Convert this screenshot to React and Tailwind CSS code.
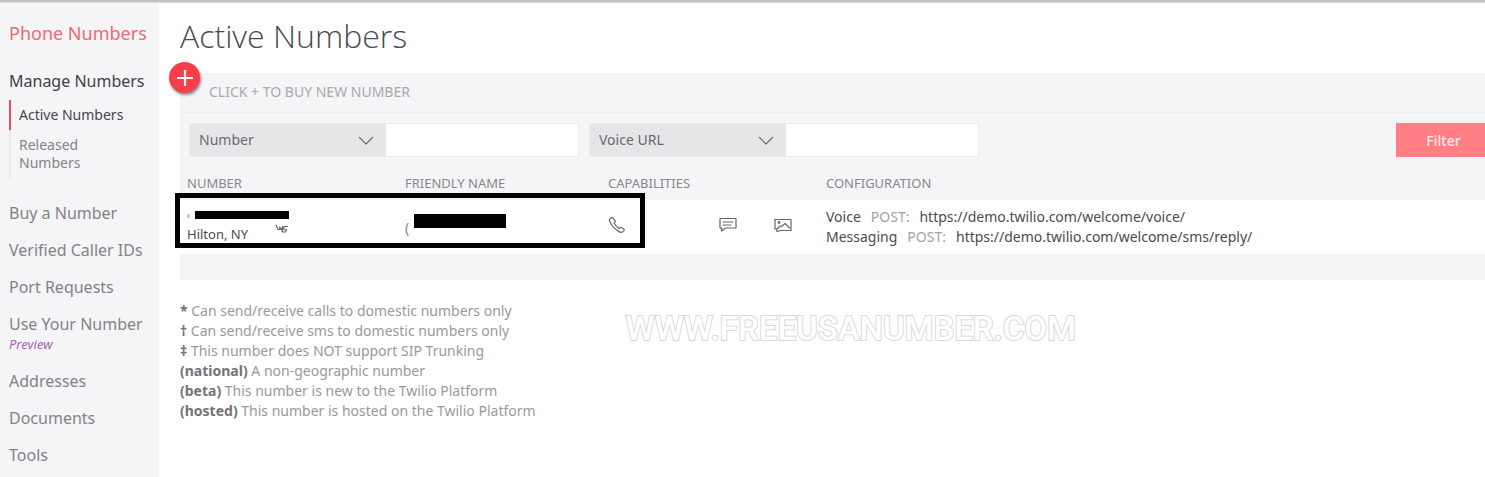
const NAV_ITEMS = [
  { label: "Buy a Number" },
  { label: "Verified Caller IDs" },
  { label: "Port Requests" },
  { label: "Use Your Number", note: "Preview" },
  { label: "Addresses" },
  { label: "Documents" },
  { label: "Tools" },
];

const NOTES = [
  ["*", "Can send/receive calls to domestic numbers only"],
  ["†", "Can send/receive sms to domestic numbers only"],
  ["‡", "This number does NOT support SIP Trunking"],
  ["(national)", "A non-geographic number"],
  ["(beta)", "This number is new to the Twilio Platform"],
  ["(hosted)", "This number is hosted on the Twilio Platform"],
];

const Icon = ({ children, ...props }) => (
  <svg
    xmlns="http://www.w3.org/2000/svg"
    fill="none"
    stroke="currentColor"
    strokeWidth={1.2}
    strokeLinecap="round"
    strokeLinejoin="round"
    {...props}
  >
    {children}
  </svg>
);

const PhoneIcon = (props) => (
  <Icon viewBox="0 0 18 18" {...props}>
    <path d="M3.3 1.7 1.6 3.2C.8 4.400 2.600 8.200 6 11.600s7.200 5.300 8.400 4.500l1.700-1.700c.4-.4.3-.9-.1-1.200l-2.400-1.700c-.4-.3-.9-.2-1.200.1l-.9 1c-1.600-.8-4.800-4-5.500-5.500l1-1c.4-.4.4-.8.100-1.200L4.800 1.900c-.4-.5-1-.6-1.500-.2Z" />
  </Icon>
);

const MessageIcon = (props) => (
  <Icon viewBox="0 0 18 16" {...props}>
    <path d="M1 1.500h16v9.500H6.500L2.500 14V11H1Z" />
    <path d="M4 5h10M4 8h8" />
  </Icon>
);

const PictureMessageIcon = (props) => (
  <Icon viewBox="0 0 18 16" {...props}>
    <path d="M1 2.500h16v11H7L3 14.500l-.5-2.500H1Z" />
    <path d="m3 12 3-3 1.500.5L11 6.500l4.500 4.500" />
    <circle cx="5" cy="5.500" r=".8" />
  </Icon>
);

const ChevronIcon = (props) => (
  <Icon viewBox="0 0 16 10" {...props}>
    <path d="m1.500 1.500 6.500 6.500 6.500-6.500" />
  </Icon>
);

const PointerIcon = (props) => (
  <Icon viewBox="0 0 14 10" {...props}>
    <path d="m1 1 2 4.500h2L4.500 3l3 3.500V2.500M12.500 2.500H9L8.500 5l3 .5-1 2.500H8L7 7" />
  </Icon>
);

function FilterField({ id, option }) {
  return (
    <div className="flex h-[34px] w-[390px] border border-[#ececee]">
      <div className="relative w-[196px] shrink-0">
        <select
          id={id}
          aria-label={`${option} filter field`}
          className="h-full w-full appearance-none bg-[#e6e5e7] pl-[9px] text-sm text-[#69696d] outline-none"
        >
          <option>{option}</option>
        </select>
        <ChevronIcon className="pointer-events-none absolute top-3 right-3 h-[10px] w-4 text-[#6d6d70]" />
      </div>
      <input
        type="text"
        aria-label={`${option} value`}
        className="min-w-0 flex-1 bg-white px-2 text-sm outline-none"
      />
    </div>
  );
}

function Sidebar() {
  return (
    <nav className="w-[159px] shrink-0 bg-[#f5f4f7] px-[9px] pt-[14px] text-[16px] text-[#838387]">
      <h2 className="text-[18px] leading-8 text-[#ec6b70] whitespace-nowrap">
        Phone Numbers
      </h2>
      <a href="#manage" className="mt-5 block leading-6 whitespace-nowrap text-[#414147]">
        Manage Numbers
      </a>
      <ul className="mt-[7px] text-[14px] leading-[18px]">
        <li className="border-l-2 border-[#e8505b] py-[6px] pl-2">
          <a href="#active" className="whitespace-nowrap text-[#47474c]">
            Active Numbers
          </a>
        </li>
        <li className="border-l-2 border-[#e8e7ea] py-[6px] pl-2">
          <a href="#released" className="block w-20">
            Released Numbers
          </a>
        </li>
      </ul>
      <ul className="mt-[23px] flex flex-col gap-[13px] leading-6">
        {NAV_ITEMS.map(({ label, note }) => (
          <li key={label}>
            <a href="#nav" className="block whitespace-nowrap">
              {label}
              {note && (
                <em className="block pb-1 text-[13px] leading-4 text-[#a55fb8]">
                  {note}
                </em>
              )}
            </a>
          </li>
        ))}
      </ul>
    </nav>
  );
}

function NumbersTable() {
  return (
    <div className="relative">
      <table className="w-full table-fixed text-left text-[14px]">
        <colgroup>
          <col className="w-[218px]" />
          <col className="w-[203px]" />
          <col className="w-[218px]" />
          <col />
        </colgroup>
        <thead>
          <tr className="h-[33px] text-[13px] text-[#88888c]">
            <th className="pl-[7px] font-normal">NUMBER</th>
            <th className="pl-[7px] font-normal">FRIENDLY NAME</th>
            <th className="pl-[7px] font-normal">CAPABILITIES</th>
            <th className="pl-[7px] font-normal">CONFIGURATION</th>
          </tr>
        </thead>
        <tbody>
          <tr className="h-[54px] bg-white text-[#4b4b50]">
            <td className="pl-[7px]">
              <div className="flex h-4 items-center gap-1">
                <span className="w-1 text-[10px] text-[#e8505b]">‹</span>
                <span className="h-2 w-[94px] bg-black" />
              </div>
              <div className="pb-[2px] text-[13px] leading-[22px]">Hilton, NY</div>
            </td>
            <td className="pl-[7px]">
              <div className="flex items-center gap-1">
                <span className="w-[5px] text-[#838387]">(</span>
                <span className="mb-3 h-[14px] w-[92px] bg-black" />
              </div>
            </td>
            <td className="pl-[7px]">
              <div className="flex items-center pb-1 text-[#66666a]">
                <PhoneIcon className="h-[18px] w-[18px]" />
                <MessageIcon className="ml-[93px] h-4 w-[18px]" />
                <PictureMessageIcon className="ml-[37px] h-4 w-[18px]" />
              </div>
            </td>
            <td className="pl-[7px] leading-5">
              <div className="flex gap-[10px]">
                Voice <span className="text-[#a2a2a6]">POST:</span>
                <span>https://demo.twilio.com/welcome/voice/</span>
              </div>
              <div className="flex gap-[10px]">
                Messaging <span className="text-[#a2a2a6]">POST:</span>
                <span>https://demo.twilio.com/welcome/sms/reply/</span>
              </div>
            </td>
          </tr>
        </tbody>
      </table>
      <div className="pointer-events-none absolute top-[26px] -left-[5px] h-[55px] w-[470px] border-[5px] border-black" />
      <PointerIcon className="absolute top-[57px] left-[95px] h-[10px] w-[14px] text-[#66666a]" />
    </div>
  );
}

export default function App() {
  return (
    <div className="flex min-h-screen flex-col bg-white font-['Noto_Sans','Open_Sans',sans-serif]">
      <div className="h-[3px] border-b border-[#dcdcdc] bg-[#c2c1c2]" />
      <div className="flex flex-1">
        <Sidebar />
        <main className="min-w-0 flex-1 pl-[21px]">
          <h1 className="pt-3 text-[32px] leading-[42px] font-light text-[#4a4a50] font-['Open_Sans','Noto_Sans',sans-serif]">
            Active Numbers
          </h1>
          <section className="mt-4 bg-[#f5f4f7] pb-[26px]">
            <div className="relative flex h-10 items-center border-b border-[#eeedf0] pb-[2px] pl-[29px] text-[14px] text-[#a9a9ad]">
              <button
                type="button"
                aria-label="Buy new number"
                className="absolute -top-[11px] -left-[11px] flex h-[31px] w-[31px] items-center justify-center rounded-full bg-[#f73f4b] text-white shadow-[1px_2px_3px_rgba(0,0,0,0.45)]"
              >
                <svg viewBox="0 0 16 16" className="h-4 w-4" stroke="currentColor" strokeWidth={2.2}>
                  <path d="M8 0v16M0 8h16" />
                </svg>
              </button>
              CLICK + TO BUY NEW NUMBER
            </div>
            <div className="flex items-center gap-[10px] pt-[10px] pb-[10px] pl-[9px]">
              <FilterField id="number-field" option="Number" />
              <FilterField id="voice-field" option="Voice URL" />
              <button
                type="button"
                className="ml-auto h-[34px] w-[89px] bg-[#ff7f84] pl-[6px] text-[14px] font-medium text-[#ffe9ea]"
              >
                Filter
              </button>
            </div>
            <NumbersTable />
          </section>
          <div className="flex items-start gap-[90px] pt-[21px]">
            <ul className="text-[14px] leading-5 whitespace-nowrap text-[#99999d]">
              {NOTES.map(([mark, text]) => (
                <li key={mark}>
                  <strong className="text-[#737377]">{mark}</strong> {text}
                </li>
              ))}
            </ul>
            <p className="pt-3 text-[33px] leading-8 font-medium whitespace-nowrap text-white [-webkit-text-stroke:2px_#d9d9d9] [paint-order:stroke_fill] font-['Roboto',sans-serif]">
              WWW.FREEUSANUMBER.COM
            </p>
          </div>
        </main>
      </div>
    </div>
  );
}
